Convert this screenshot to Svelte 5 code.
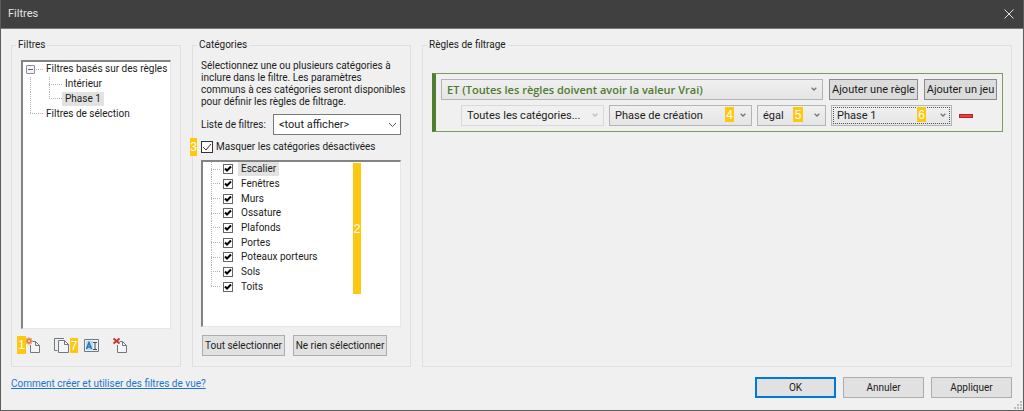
<script>
  const filters = [
    { name: 'Filtres basés sur des règles', kind: 'root' },
    { name: 'Intérieur', kind: 'child' },
    { name: 'Phase 1', kind: 'child', last: true, selected: true },
    { name: 'Filtres de sélection', kind: 'leaf' }
  ];
  const names = ['Escalier', 'Fenêtres', 'Murs', 'Ossature', 'Plafonds', 'Portes', 'Poteaux porteurs', 'Sols', 'Toits'];
  let categories = $state(names.map((name) => ({ name, on: true })));
  let hideUnchecked = $state(true);
  let open = $state(true);
  const rows = $derived(filters.filter((f) => open || f.kind !== 'child'));
</script>

{#snippet chevron()}
  <svg class="chevron" viewBox="0 0 9 6" aria-hidden="true"><path d="M1 1l3.5 3.5L8 1" /></svg>
{/snippet}

{#snippet page()}
  <path class="fill" d="M5.500 4.500h5l4 4v7h-9z" />
  <path class="edge" d="M5.500 8v7.500h9v-7l-4-4h-3M10.500 4.500v4h4" />
{/snippet}

<div class="window">
  <header>
    <h1>Filtres</h1>
    <button class="close" aria-label="Fermer">
      <svg viewBox="0 0 10 10"><path d="M.5.5l9 9M9.500.5l-9 9" /></svg>
    </button>
  </header>

  <main>
    <fieldset class="filters">
      <legend>Filtres</legend>
      <div class="box">
        <ul class="tree">
          {#each rows as f}
            <li>
              <span class="guide {f.kind}">
                {#if f.kind === 'root'}
                  <button class="toggle" aria-label="Développer" aria-expanded={open} onclick={() => (open = !open)}></button>
                {/if}
              </span>
              {#if f.kind === 'child'}<span class="guide branch" class:last={f.last}></span>{/if}
              <span class="name" class:selected={f.selected}>{f.name}</span>
            </li>
          {/each}
        </ul>
      </div>
      <div class="tools">
        <button aria-label="Nouveau">
          <svg viewBox="0 0 16 16">
            {@render page()}
            <path d="M4 .5v7M.5 4h7M1.500 1.500l5 5M6.500 1.500l-5 5" stroke="#ea7a2c" stroke-width="1.500" />
            <circle cx="4" cy="4" r="1.500" fill="#fff2c8" stroke="#ea7a2c" />
          </svg>
          <span class="badge new">1</span>
        </button>
        <button aria-label="Dupliquer">
          <svg viewBox="0 0 16 16">
            <path class="edge" d="M10 1.500H.5v12h3" />
            <path class="fill" d="M4.500 3.500h6l4 4v8h-10z" />
            <path class="edge" d="M4.500 3.500h6l4 4v8h-10zM10.500 3.500v4h4" />
          </svg>
          <span class="badge copy">7</span>
        </button>
        <button aria-label="Renommer">
          <svg viewBox="0 0 16 16">
            <path d="M1.500 2.500h14v12h-14z" fill="#eef3f7" stroke="#73767c" />
            <path d="M3 4h7v9H3z" fill="#b5daf1" />
            <path d="M3.500 12L6 5.500 8.500 12M4.500 10h3" fill="none" stroke="#2874b2" stroke-width="1.500" />
            <path d="M10 5.500h4M12 5.500v7M10 12.500h4" stroke="#44484e" />
          </svg>
        </button>
        <button aria-label="Supprimer">
          <svg viewBox="0 0 16 16">
            {@render page()}
            <path d="M1.500 1.500l6 5M7.500 1.500l-6 5" stroke="#cb3532" stroke-width="2" />
          </svg>
        </button>
      </div>
    </fieldset>

    <fieldset class="categories">
      <legend>Catégories</legend>
      <p>Sélectionnez une ou plusieurs catégories à<br />inclure dans le filtre. Les paramètres<br />communs à ces catégories seront disponibles<br />pour définir les règles de filtrage.</p>
      <div class="field">
        <label for="list">Liste de filtres:</label>
        <span class="combo white">
          <select id="list"><option>&lt;tout afficher&gt;</option></select>
          {@render chevron()}
        </span>
      </div>
      <label class="hide">
        <input type="checkbox" bind:checked={hideUnchecked} />
        Masquer les catégories désactivées
        <span class="badge three">3</span>
      </label>
      <div class="box">
        <ul class="tree checks">
          {#each categories as c, i}
            <li>
              <span class="guide branch" class:last={i === categories.length - 1}></span>
              <label>
                <input type="checkbox" bind:checked={c.on} />
                <span class="name" class:selected={i === 0}>{c.name}</span>
              </label>
            </li>
          {/each}
        </ul>
        <span class="badge two">2</span>
      </div>
      <div class="actions">
        <button class="push all">Tout sélectionner</button>
        <button class="push none">Ne rien sélectionner</button>
      </div>
    </fieldset>

    <fieldset class="rules">
      <legend>Règles de filtrage</legend>
      <div class="set">
        <div class="line">
          <span class="combo operator">
            <select aria-label="Opérateur"><option>ET (Toutes les règles doivent avoir la valeur Vrai)</option></select>
            {@render chevron()}
          </span>
          <button class="push rule">Ajouter une règle</button>
          <button class="push group">Ajouter un jeu</button>
        </div>
        <div class="line condition">
          <span class="combo category disabled">
            <select aria-label="Catégorie" disabled><option>Toutes les catégories...</option></select>
            {@render chevron()}
          </span>
          <span class="combo parameter">
            <select aria-label="Paramètre"><option>Phase de création</option></select>
            {@render chevron()}
            <span class="badge over">4</span>
          </span>
          <span class="combo test">
            <select aria-label="Condition"><option>égal</option></select>
            {@render chevron()}
            <span class="badge over">5</span>
          </span>
          <span class="combo value">
            <select aria-label="Valeur"><option>Phase 1</option></select>
            {@render chevron()}
            <span class="badge over">6</span>
          </span>
          <button class="remove" aria-label="Supprimer la règle"></button>
        </div>
      </div>
    </fieldset>
  </main>

  <footer>
    <a href="#aide">Comment créer et utiliser des filtres de vue?</a>
    <div class="dialog">
      <button class="push ok">OK</button>
      <button class="push">Annuler</button>
      <button class="push">Appliquer</button>
    </div>
    <svg class="grip" viewBox="0 0 8 8" aria-hidden="true">
      <path d="M6 0h2v2H6zM3 3h2v2H3zM6 3h2v2H6zM0 6h2v2H0zM3 6h2v2H3zM6 6h2v2H6z" />
    </svg>
  </footer>
</div>

<style>
  :global(body) { margin: 0; background: #f0f0f0; }
  * { box-sizing: border-box; }
  .window {
    display: flex;
    flex-direction: column;
    min-height: 100vh;
    border: 1px solid #5c5c5c;
    border-top: 0;
    background: #f0f0f0;
    color: #1c1c1c;
    font: 10px/12px Roboto, "Noto Sans", sans-serif;
  }
  button, select, input { font: inherit; color: inherit; margin: 0; padding: 0; }
  header {
    display: flex;
    align-items: center;
    justify-content: space-between;
    height: 29px;
    padding: 0 9px 0 7px;
    background: #404040;
    border-bottom: 1px solid #777;
    color: #e4e4e4;
  }
  h1 { margin: 0; font: 11px/16px Roboto, sans-serif; }
  .close { display: flex; padding: 0; border: 0; background: none; }
  .close svg { width: 10px; height: 10px; fill: none; stroke: #e4e4e4; }
  main {
    display: grid;
    grid-template-columns: 170px 219px minmax(0, 1fr);
    gap: 11px;
    padding: 8px 11px 0 10px;
    flex: 1;
  }
  fieldset {
    display: flex;
    flex-direction: column;
    min-width: 0;
    margin: 0;
    padding: 7px 9px 10px;
    border: 1px solid #dfdfdf;
  }
  .categories { padding-left: 8px; }
  legend { height: 16px; line-height: 16px; padding: 0 2px; margin-left: -5px; }
  .categories legend { margin-left: -4px; }
  .box {
    position: relative;
    flex: 1;
    background: #fff;
    border: 1px solid #e6e6e6;
    border-top: 2px solid #838383;
    border-left: 2px solid #838383;
  }
  .tree { display: grid; grid-auto-rows: 1fr; height: 59px; margin: 0; padding: 0 0 0 3px; list-style: none; }
  .tree li, .tree label { display: flex; align-items: center; }
  .checks { height: 132px; padding-left: 8px; }
  .guide {
    --dots-x: repeating-linear-gradient(90deg, #b4b4b4 0 1px, #fff 1px 2px);
    --dots-y: repeating-linear-gradient(#b4b4b4 0 1px, #fff 1px 2px);
    display: flex;
    align-items: center;
    align-self: stretch;
    flex: none;
    width: 18px;
    background-repeat: no-repeat;
  }
  .guide.root { width: 17px; background-image: var(--dots-x); background-size: 14px 1px; background-position: 4px 50%; }
  .guide.child { background-image: var(--dots-y); background-size: 1px 100%; background-position: 4px 0; }
  .guide.leaf {
    width: 17px;
    background-image: var(--dots-x), var(--dots-y);
    background-size: 13px 1px, 1px 50%;
    background-position: 4px 50%, 4px 0;
  }
  .guide.branch {
    background-image: var(--dots-x), var(--dots-y);
    background-size: 13px 1px, 1px 100%;
    background-position: 5px 50%, 5px 0;
  }
  .guide.branch.last { background-size: 13px 1px, 1px 50%; }
  .checks .guide.branch { width: 12px; background-position: 0 50%, 0 0; background-size: 10px 1px, 1px 100%; }
  .checks .guide.branch.last { background-size: 10px 1px, 1px 50%; }
  .toggle {
    width: 9px;
    height: 9px;
    border: 1px solid #8e8e8e;
    border-radius: 1px;
    background: linear-gradient(#4b63a7, #4b63a7) center / 5px 1px no-repeat #f4f4f4;
  }
  .name { padding: 0 3px; line-height: 14px; white-space: nowrap; }
  .selected { background: #e2e2e2; }
  input[type='checkbox'] {
    appearance: none;
    flex: none;
    width: 12px;
    height: 12px;
    border: 1px solid #333;
    background: #fff;
  }
  input[type='checkbox']:checked {
    background: url("data:image/svg+xml,%3Csvg xmlns='http://www.w3.org/2000/svg' viewBox='0 0 10 10'%3E%3Cpath d='M1 5l3 3 5-6' fill='none' stroke='%23333'/%3E%3C/svg%3E") center / 10px 10px #fff;
  }
  .checks input[type='checkbox'] { width: 10px; height: 10px; margin-right: 5px; border-color: #666; }
  .checks input[type='checkbox']:checked {
    background: url("data:image/svg+xml,%3Csvg xmlns='http://www.w3.org/2000/svg' viewBox='0 0 8 8'%3E%3Cpath d='M1 3.500l2 2 4-4' fill='none' stroke='%23000' stroke-width='2'/%3E%3C/svg%3E") center / 8px 8px #fff;
  }
  .tools { display: flex; gap: 13px; padding: 8px 0 3px 4px; }
  .tools button { position: relative; display: flex; border: 0; background: none; }
  .tools svg { width: 16px; height: 16px; fill: none; }
  .fill { fill: #f4f5f7; }
  .edge { fill: none; stroke: #73767c; }
  .badge {
    position: absolute;
    display: flex;
    align-items: center;
    justify-content: center;
    width: 8px;
    background: #ffc810;
    color: #fff;
    font: 12px/14px "Liberation Sans", sans-serif;
  }
  .badge.new { left: -8px; top: -1px; height: 18px; width: 9px; }
  .badge.copy { left: 16px; top: 1px; height: 15px; }
  .badge.three { left: -11px; top: -1px; height: 18px; width: 7px; }
  .badge.two { right: 39px; top: 1px; height: 131px; }
  .badge.over { right: 18px; top: 2px; height: 15px; width: 9px; }
  .test .badge.over { right: 23px; width: 10px; }
  .value .badge.over { right: 26px; }
  p { margin: 0; white-space: nowrap; }
  .field { display: grid; grid-template-columns: 72px 1fr; align-items: center; margin-top: 6px; }
  .hide { position: relative; display: flex; align-items: center; gap: 3px; height: 16px; margin: 4px 0 5px; }
  .combo { position: relative; display: flex; min-width: 0; }
  .combo select {
    appearance: none;
    width: 100%;
    height: 21px;
    padding: 0 14px 0 5px;
    border: 1px solid #b4b4b4;
    border-radius: 0;
    background: linear-gradient(#f0f0f0, #e5e5e5);
    outline: 0;
  }
  .combo.white select { background: #fff; border-color: #7a7a7a; font-size: 11px; }
  .chevron {
    position: absolute;
    right: 6px;
    top: 8px;
    width: 6px;
    height: 4px;
    fill: none;
    stroke: #777;
    stroke-width: 2;
    pointer-events: none;
  }
  .white .chevron { right: 4px; top: 8px; width: 9px; height: 6px; stroke: #555; stroke-width: 1; }
  .push {
    height: 21px;
    border: 1px solid #adadad;
    background: #e1e1e1;
    white-space: nowrap;
  }
  .actions { display: flex; gap: 8px; padding: 8px 0 0 1px; }
  .all { width: 83px; }
  .none { width: 94px; }
  .rules { padding: 20px 8px 20px 9px; }
  .set {
    display: grid;
    gap: 5px;
    padding: 5px;
    border: 1px solid #7a9c5c;
    border-left: 4px solid #507e32;
    font: 11px/16px Roboto, sans-serif;
  }
  .line { display: flex; gap: 6px; }
  .operator { flex: 1; }
  .operator select { color: #507a2e; font-family: "Open Sans", sans-serif; font-weight: 600; }
  .line .push { border-color: #8a8a8a; background: #dcdcdc; }
  .rule { width: 89px; }
  .group { width: 73px; }
  .condition { gap: 5px; padding-left: 20px; }
  .category { width: 143px; }
  .parameter { width: 143px; }
  .test { width: 69px; }
  .value { width: 121px; }
  .combo.disabled select { border-color: #d9d9d9; background: #f0f0f0; opacity: 1; color: #1c1c1c; }
  .disabled .chevron { stroke: #bfbfbf; }
  .value select { outline: 1px dotted #555; outline-offset: -3px; }
  .remove {
    align-self: center;
    width: 14px;
    height: 4px;
    margin-left: 2px;
    border: 1px solid #b32424;
    background: #e8403c;
  }
  footer {
    position: relative;
    display: flex;
    align-items: flex-start;
    justify-content: space-between;
    padding: 10px 11px 12px 10px;
  }
  footer a { color: #1c74cf; margin-top: 1px; }
  .dialog { display: flex; gap: 7px; }
  .dialog .push { width: 81px; }
  .dialog .ok { border: 2px solid #0078d7; }
  .grip { position: absolute; right: 1px; bottom: 1px; width: 8px; height: 8px; fill: #bdbdbd; }
</style>
